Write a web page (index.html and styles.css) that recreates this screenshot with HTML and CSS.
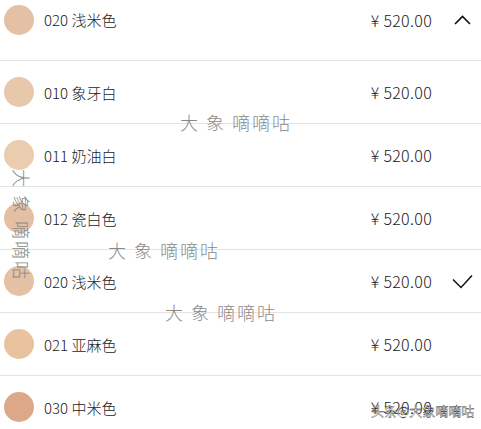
FILE: index.html
```html
<!DOCTYPE html>
<html lang="zh">
<head>
<meta charset="utf-8">
<link rel="stylesheet" href="styles.css">
</head>
<body>
<div class="list">
  <div class="row head">
    <span class="dot" style="background:#e4c0a4"></span>
    <span class="name">020 浅米色</span>
    <span class="price">¥ 520.00</span>
    <span class="mark"><svg width="17" height="10" viewBox="0 0 17 10"><path d="M1 9 L8.5 1.5 L16 9" fill="none" stroke="#111" stroke-width="1.6"/></svg></span>
  </div>
  <div class="row">
    <span class="dot" style="background:#e8c8ab"></span>
    <span class="name">010 象牙白</span>
    <span class="price">¥ 520.00</span>
    <span class="mark"></span>
  </div>
  <div class="row">
    <span class="dot" style="background:#e9cdae"></span>
    <span class="name">011 奶油白</span>
    <span class="price">¥ 520.00</span>
    <span class="mark"></span>
  </div>
  <div class="row">
    <span class="dot" style="background:#e5bfa3"></span>
    <span class="name">012 瓷白色</span>
    <span class="price">¥ 520.00</span>
    <span class="mark"></span>
  </div>
  <div class="row">
    <span class="dot" style="background:#e4c0a4"></span>
    <span class="name">020 浅米色</span>
    <span class="price">¥ 520.00</span>
    <span class="mark"><svg width="21" height="15" viewBox="0 0 21 15"><path d="M1 5.5 L9 13.5 L20 1.5" fill="none" stroke="#111" stroke-width="1.5"/></svg></span>
  </div>
  <div class="row">
    <span class="dot" style="background:#e9c39f"></span>
    <span class="name">021 亚麻色</span>
    <span class="price">¥ 520.00</span>
    <span class="mark"></span>
  </div>
  <div class="row">
    <span class="dot" style="background:#dba98a"></span>
    <span class="name">030 中米色</span>
    <span class="price">¥ 520.00</span>
    <span class="mark"></span>
  </div>
</div>
<div class="wm wm1">大 象 嘀嘀咕</div>
<div class="wm wm2">大 象 嘀嘀咕</div>
<div class="wm wm3">大 象 嘀嘀咕</div>
<div class="wm wm4">大 象 嘀嘀咕</div>
<div class="credit">头条@大象嘀嘀咕</div>
</body>
</html>
```

FILE: styles.css
```css
html, body {
  margin: 0;
  padding: 0;
  background: #fff;
  overflow: hidden;
}
body {
  width: 481px;
  height: 429px;
  position: relative;
  font-family: "Noto Sans CJK SC", "Noto Sans", sans-serif;
  color: #1a1a1a;
}
.list {
  display: flex;
  flex-direction: column;
}
.row {
  display: flex;
  align-items: center;
  height: 62px;
  border-top: 1px solid #e3e3e3;
  padding-left: 4px;
}
.row.head {
  border-top: none;
  height: 60px;
  align-items: flex-start;
}
.row.head > * {
  margin-top: 5px;
  height: 30px;
  display: flex;
  align-items: center;
}
.row.head > .price {
  justify-content: flex-end;
}
.row.head > .name {
  margin-top: 4px;
}
.dot {
  width: 30px;
  height: 30px;
  border-radius: 50%;
  flex: none;
}
.name {
  margin-left: 10px;
  font-size: 15px;
  font-weight: 300;
  flex: 1;
}
.price {
  font-size: 16px;
  font-weight: 300;
  letter-spacing: 0.3px;
  width: 80px;
  text-align: right;
}
.mark {
  width: 49px;
  display: flex;
  justify-content: center;
  align-items: center;
  padding-left: 12px;
  box-sizing: border-box;
}
.wm {
  position: absolute;
  color: #8a8a8a;
  font-size: 18px;
  letter-spacing: 2px;
  white-space: nowrap;
  font-weight: 300;
  line-height: 24px;
}
.wm1 { left: 180px; top: 110px; }
.wm2 { left: 108px; top: 238px; }
.wm3 { left: 165px; top: 300px; }
.wm4 {
  left: -33px;
  top: 212px;
  width: 110px;
  transform: rotate(90deg);
}
.credit {
  position: absolute;
  left: 371px;
  top: 401px;
  font-size: 13px;
  color: #fff;
  -webkit-text-stroke: 0.35px #222;
  white-space: nowrap;
}
```
